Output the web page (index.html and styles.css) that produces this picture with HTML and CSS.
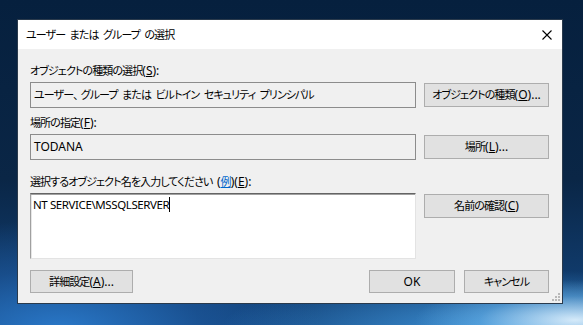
FILE: index.html
```html
<!DOCTYPE html>
<html lang="ja">
<head>
<meta charset="utf-8">
<title>ユーザー または グループ の選択</title>
<link rel="stylesheet" href="styles.css">
</head>
<body>
<div class="desktop">
  <div class="dialog">
    <div class="titlebar">
      <span class="title">ユーザー または グループ の選択</span>
      <span class="close">
        <svg width="10" height="10" viewBox="0 0 10 10"><path d="M0.5 0.5 L9.5 9.5 M9.5 0.5 L0.5 9.5" stroke="#000" stroke-width="1.1" fill="none"/></svg>
      </span>
    </div>
    <div class="content">
      <div class="field f1">
        <div class="label">オブジェクトの種類の選択<span class="lat">(<u>S</u>):</span></div>
        <div class="row">
          <div class="box readonly">ユーザー、<span class="gap"></span>グループ または ビルトイン セキュリティ プリンシパル</div>
          <div class="btn">オブジェクトの種類<span class="lat">(<u>O</u>)...</span></div>
        </div>
      </div>
      <div class="field f2">
        <div class="label">場所の指定<span class="lat">(<u>F</u>):</span></div>
        <div class="row">
          <div class="box readonly"><span class="lat">TODANA</span></div>
          <div class="btn">場所<span class="lat">(<u>L</u>)...</span></div>
        </div>
      </div>
      <div class="field f3">
        <div class="label">選択するオブジェクト名を入力してください <span class="lat">(</span><a class="link">例</a><span class="lat">)(<u>E</u>):</span></div>
        <div class="row">
          <div class="box edit"><span class="entry">NT SERVICE\MSSQLSERVER</span><span class="caret"></span></div>
          <div class="btn">名前の確認<span class="lat">(<u>C</u>)</span></div>
        </div>
      </div>
      <div class="actions">
        <div class="btn adv">詳細設定<span class="lat">(<u>A</u>)...</span></div>
        <div class="spacer"></div>
        <div class="btn ok"><span class="lat">OK</span></div>
        <div class="btn cancel">キャンセル</div>
      </div>
      <div class="grip">
        <svg width="8" height="8" viewBox="0 0 8 8" fill="#b8b8b8"><rect x="6" y="0" width="2" height="2"/><rect x="3" y="3" width="2" height="2"/><rect x="6" y="3" width="2" height="2"/><rect x="0" y="6" width="2" height="2"/><rect x="3" y="6" width="2" height="2"/><rect x="6" y="6" width="2" height="2"/></svg>
      </div>
    </div>
  </div>
</div>
</body>
</html>
```
FILE: styles.css
```css
* { box-sizing: border-box; }
html, body { margin: 0; padding: 0; }
body {
  width: 583px;
  height: 325px;
  overflow: hidden;
  font-family: "Noto Sans", "Noto Sans CJK JP", sans-serif;
  font-size: 11px;
  letter-spacing: -0.9px;
  word-spacing: 2.5px;
  color: #000;
  font-feature-settings: "palt";
}
.lat {
  font-size: 12px;
  letter-spacing: 0;
  word-spacing: 0;
}
.gap { display: inline-block; width: 3px; }
.desktop {
  width: 583px;
  height: 325px;
  padding: 19px 0 0 17px;
  background:
    radial-gradient(ellipse 160px 40px at 575px 320px, rgba(230,245,255,0.9), rgba(120,190,240,0.4) 60%, rgba(0,0,0,0) 100%),
    radial-gradient(ellipse 300px 60px at 520px 330px, rgba(70,160,230,0.9), rgba(0,0,0,0) 100%),
    radial-gradient(ellipse 260px 110px at 60px 330px, #2a78c8, rgba(30,90,160,0.6) 55%, rgba(0,0,0,0) 100%),
    linear-gradient(180deg, #06203e 0%, #0a2646 55%, #13457e 100%);
}
.dialog {
  position: relative;
  width: 546px;
  height: 285px;
  border: 1px solid #2a3a4c;
  background: #f0f0f0;
  display: flex;
  flex-direction: column;
}
.titlebar {
  height: 29px;
  background: #fff;
  display: flex;
  align-items: center;
  padding-left: 8px;
}
.title {
  flex: 1;
  line-height: 16px;
  margin-top: 1px;
}
.close {
  width: 30px;
  display: flex;
  justify-content: center;
}
.close svg { display: block; }
.content {
  flex: 1;
  position: relative;
  padding: 14px 13px 0 12px;
}
.label {
  height: 16px;
  line-height: 16px;
  white-space: nowrap;
}
.row {
  display: flex;
  gap: 8px;
  margin-top: 3px;
  align-items: flex-start;
}
.f2 { margin-top: 7px; }
.f3 { margin-top: 14px; }
.box {
  width: 386px;
  height: 26px;
  padding: 3px 0 0 3px;
  line-height: 17px;
  white-space: nowrap;
  overflow: hidden;
}
.readonly {
  background: #f0f0f0;
  border: 1px solid #8c8c8c;
}
.edit {
  height: 66px;
  background: #fff;
  border-top: 1px solid #646464;
  border-left: 1px solid #a0a0a0;
  border-right: 1px solid #e3e3e3;
  border-bottom: 1px solid #e3e3e3;
  box-shadow: inset 0 1px 0 #a0a0a0, inset 1px 0 0 #e6e6e6;
  padding: 2px 0 0 2px;
  display: flex;
  align-items: flex-start;
}
.entry { letter-spacing: -0.4px; word-spacing: 0; font-size: 11.5px; }
.caret {
  display: inline-block;
  width: 1px;
  height: 15px;
  margin-top: 1px;
  background: #000;
}
.btn {
  width: 125px;
  height: 24px;
  margin-top: 1px;
  background: #e1e1e1;
  border: 1px solid #adadad;
  display: flex;
  align-items: center;
  justify-content: center;
  line-height: 16px;
  white-space: nowrap;
}
u { text-underline-offset: 1px; }
.link { color: #0066cc; text-decoration: underline; text-underline-offset: 1px; }
.actions {
  display: flex;
  margin-top: 11px;
  gap: 9px;
}
.actions .btn { height: 23px; margin-top: 0; }
.adv { width: 103px; }
.spacer { flex: 1; }
.ok { width: 86px; }
.cancel { width: 85px; }
.grip {
  position: absolute;
  right: 2px;
  bottom: 2px;
  width: 8px;
  height: 8px;
}
.grip svg { display: block; }
```
